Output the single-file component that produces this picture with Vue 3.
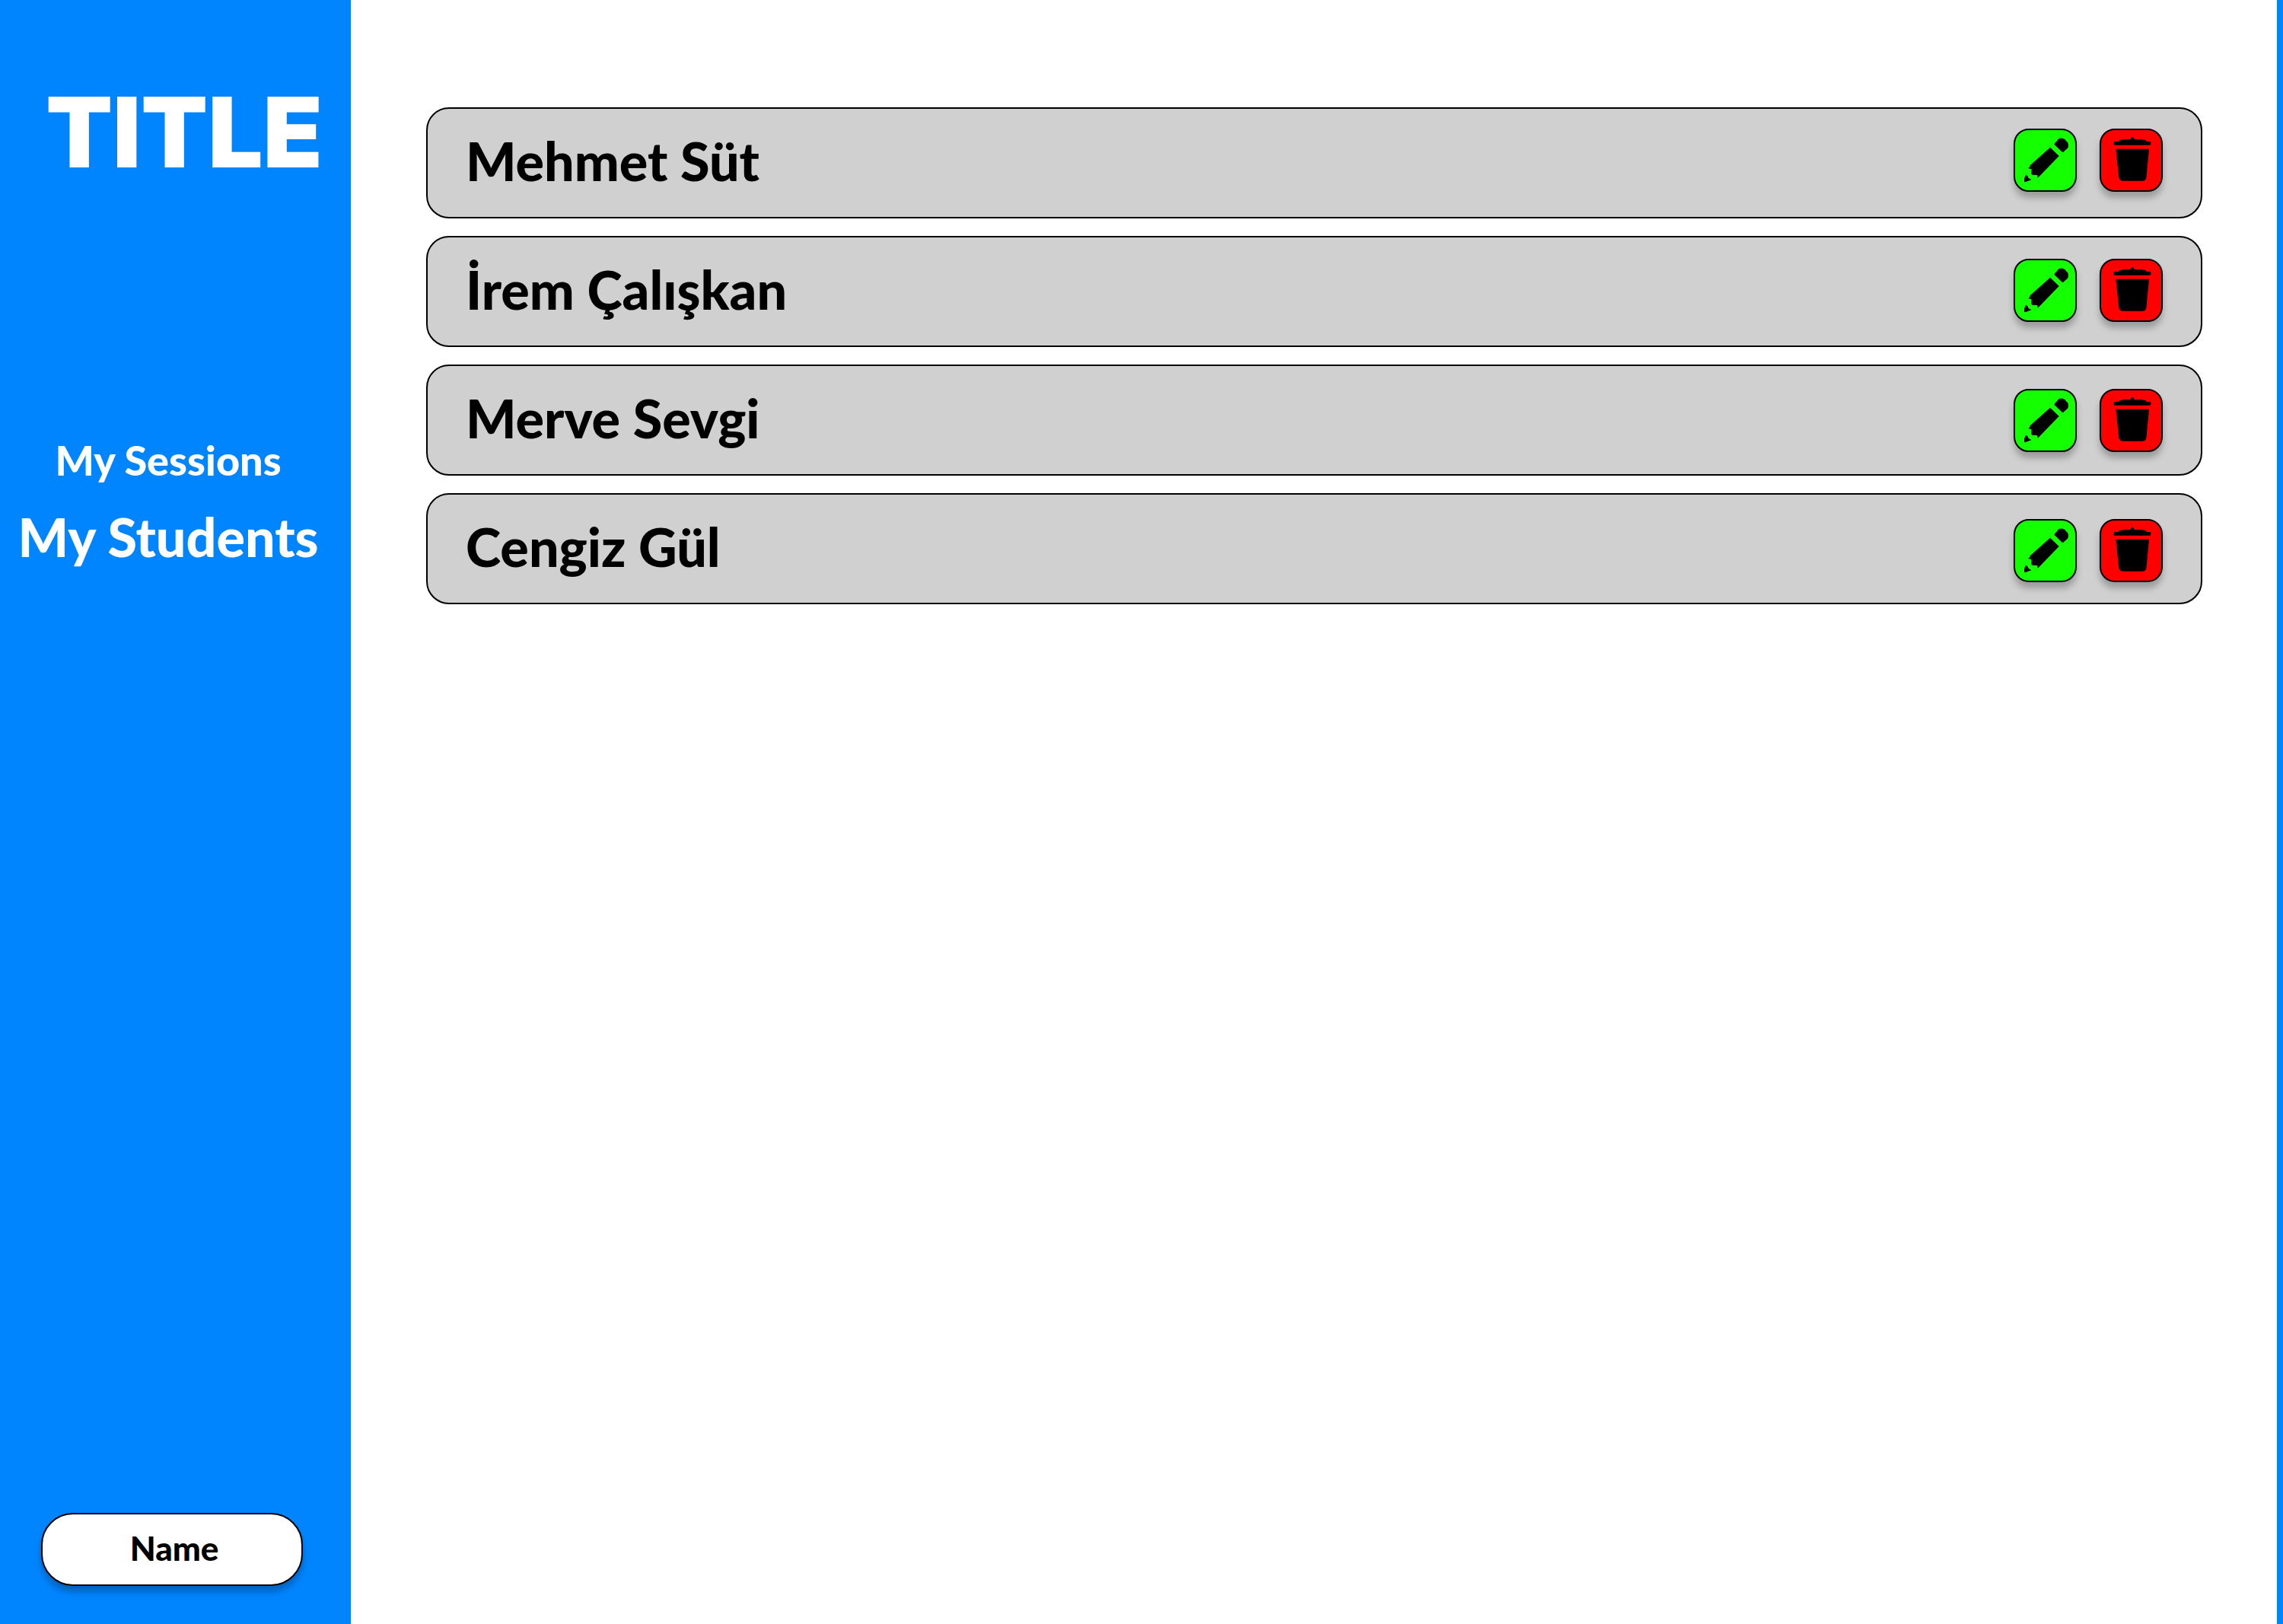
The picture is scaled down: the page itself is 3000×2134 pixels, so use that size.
<script setup>
const students = ['Mehmet Süt', 'İrem Çalışkan', 'Merve Sevgi', 'Cengiz Gül']
</script>

<template>
  <div class="app">
    <aside class="sidebar">
      <h1 class="title">TITLE</h1>
      <nav class="nav">
        <a href="#sessions" class="link">My Sessions</a>
        <a href="#students" class="link active" aria-current="page">My Students</a>
      </nav>
      <button type="button" class="profile">Name</button>
    </aside>

    <main class="content">
      <ul class="list">
        <li v-for="(student, index) in students" :key="student" class="card" :style="{ '--row': index }">
          <span class="student">{{ student }}</span>
          <div class="actions">
            <button type="button" class="action edit" :aria-label="`Edit ${student}`">
              <svg viewBox="54 61 237 237" aria-hidden="true">
                <path d="M208 117 L213 109 L219 104 L223 97 L230 93 H241 L251 98 L254 103 L261 109 L264 118 V125 L261 132 L243 148 L239 147 Z" />
                <path d="M192 129 L227 163 L145 248 L141 247 L143 240 L138 238 L121 237 L118 233 V215 L106 211 L112 205 L113 200 Z" />
                <path d="M97 238 L103 242 L106 249 L118 257 L93 266 L90 264 V252 L94 241 Z" />
              </svg>
            </button>
            <button type="button" class="action remove" :aria-label="`Delete ${student}`">
              <svg viewBox="62 61 237 237" aria-hidden="true">
                <path d="M115 106 H131 L134 101 L150 98 H176 L179 95 V93 Q180 88 185 88 Q190 88 191 93 V95 L194 98 H222 L238 101 L241 106 H255 Q258 107 258 110 V117 Q257 120 254 120 H116 Q112 120 112 117 V110 Q112 107 115 106 Z" />
                <path d="M120 135 H251 L240 249 Q237 261 226 261 H146 Q135 261 132 248 Z" />
              </svg>
            </button>
          </div>
        </li>
      </ul>
    </main>
  </div>
</template>

<style>
body {
  margin: 0;
}
</style>

<style scoped>
.app {
  box-sizing: border-box;
  display: flex;
  min-height: 100vh;
  border-right: 8px solid #0085ff;
  background: #fff;
  font-family: "Lato Black", Lato, "Open Sans", sans-serif;
  font-weight: 900;
  color: #000;
}

.sidebar {
  box-sizing: border-box;
  display: flex;
  flex: 0 0 461px;
  flex-direction: column;
  padding: 96px 19px 50px 0;
  background: #0085ff;
}

.title {
  margin: 0;
  padding-right: 18px;
  font-family: Inter, "Open Sans", sans-serif;
  font-size: 128px;
  font-weight: 900;
  line-height: 156px;
  text-align: right;
  color: #fff;
}

.nav {
  display: flex;
  flex-direction: column;
  align-items: center;
  margin-top: 317px;
}

.link {
  font-size: 54px;
  line-height: 72px;
  white-space: nowrap;
  text-decoration: none;
  color: #fff;
}

.link.active {
  font-size: 70px;
  line-height: 128px;
}

.profile {
  box-sizing: border-box;
  height: 96px;
  margin: auto 44px 0 54px;
  padding: 0 0 4px 6px;
  border: 2px solid #000;
  border-radius: 42px;
  background: #fff;
  box-shadow: 0 8px 8px rgba(0, 0, 0, 0.25);
  font: inherit;
  font-size: 44px;
  color: #000;
}

.content {
  flex: 1;
  min-width: 0;
  padding: 141px 98px 141px 99px;
}

.list {
  display: flex;
  flex-direction: column;
  gap: 23px;
  margin: 0;
  padding: 0;
  list-style: none;
}

.card {
  box-sizing: border-box;
  display: flex;
  align-items: flex-start;
  justify-content: space-between;
  height: 146px;
  padding: 0 50px;
  border: 2px solid #000;
  border-radius: 30px;
  background: #d0d0d0;
}

.student {
  font-size: 70px;
  line-height: 136px;
}

.actions {
  display: flex;
  gap: 30px;
  padding-top: calc(26px + var(--row) * 2px);
}

.action {
  box-sizing: border-box;
  width: 83px;
  height: 83px;
  padding: 0;
  border: 2px solid #000;
  border-radius: 20px;
  box-shadow: 0 8px 8px rgba(0, 0, 0, 0.25);
}

.action svg {
  display: block;
  width: 100%;
  height: 100%;
}

.edit {
  background: #14ff00;
}

.remove {
  background: #f00;
}
</style>
